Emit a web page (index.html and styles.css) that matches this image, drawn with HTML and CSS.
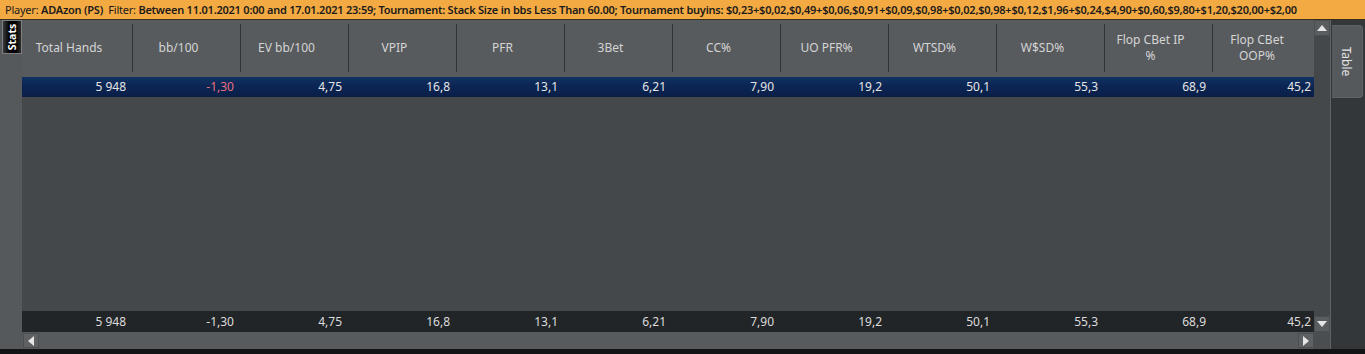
FILE: index.html
```html
<!DOCTYPE html>
<html>
<head>
<meta charset="utf-8">
<link rel="stylesheet" href="styles.css">
</head>
<body>
<div class="app">
  <div class="filterbar"><span class="lbl">Player:</span> <b>ADAzon (PS)</b>&nbsp;&nbsp;<span class="lbl">Filter:</span> <b>Between 11.01.2021 0:00 and 17.01.2021 23:59; Tournament: Stack Size in bbs Less Than 60.00; Tournament buyins: $0,23+$0,02,$0,49+$0,06,$0,91+$0,09,$0,98+$0,02,$0,98+$0,12,$1,96+$0,24,$4,90+$0,60,$9,80+$1,20,$20,00+$2,00</b></div>
  <div class="main">
    <div class="side"><div class="stats-tab"><span>Stats</span></div></div>
    <div class="grid">
      <div class="cols thead">
        <div class="th">Total Hands</div>
        <div class="th">bb/100</div>
        <div class="th">EV bb/100</div>
        <div class="th">VPIP</div>
        <div class="th">PFR</div>
        <div class="th">3Bet</div>
        <div class="th">CC%</div>
        <div class="th">UO PFR%</div>
        <div class="th">WTSD%</div>
        <div class="th">W$SD%</div>
        <div class="th">Flop CBet IP<br>%</div>
        <div class="th">Flop CBet<br>OOP%</div>
      </div>
      <div class="cols row sel">
        <div class="td">5 948</div>
        <div class="td neg">-1,30</div>
        <div class="td">4,75</div>
        <div class="td">16,8</div>
        <div class="td">13,1</div>
        <div class="td">6,21</div>
        <div class="td">7,90</div>
        <div class="td">19,2</div>
        <div class="td">50,1</div>
        <div class="td">55,3</div>
        <div class="td">68,9</div>
        <div class="td">45,2</div>
      </div>
      <div class="fill"></div>
      <div class="cols row total">
        <div class="td">5 948</div>
        <div class="td">-1,30</div>
        <div class="td">4,75</div>
        <div class="td">16,8</div>
        <div class="td">13,1</div>
        <div class="td">6,21</div>
        <div class="td">7,90</div>
        <div class="td">19,2</div>
        <div class="td">50,1</div>
        <div class="td">55,3</div>
        <div class="td">68,9</div>
        <div class="td">45,2</div>
      </div>
      <div class="hscroll">
        <div class="sbtn"><svg width="6" height="10" viewBox="0 0 6 10"><polygon points="6,0 6,10 0,5" fill="#e6e6e6"/></svg></div>
        <div class="htrack"></div>
        <div class="sbtn"><svg width="6" height="10" viewBox="0 0 6 10"><polygon points="0,0 0,10 6,5" fill="#e6e6e6"/></svg></div>
      </div>
    </div>
    <div class="vscroll">
      <div class="vbtn"><svg width="10" height="6" viewBox="0 0 10 6"><polygon points="0,6 10,6 5,0" fill="#e6e6e6"/></svg></div>
      <div class="vtrack"></div>
      <div class="vbtn"><svg width="10" height="6" viewBox="0 0 10 6"><polygon points="0,0 10,0 5,6" fill="#e6e6e6"/></svg></div>
      <div class="corner"></div>
    </div>
    <div class="rpanel"><div class="table-tab"><span>Table</span></div></div>
  </div>
  <div class="bottom"></div>
</div>
</body>
</html>
```

FILE: styles.css
```css
* { box-sizing: border-box; }
html, body { margin: 0; padding: 0; }
body {
  width: 1365px;
  height: 354px;
  overflow: hidden;
  background: #121314;
  font-family: "Noto Sans", "Open Sans", sans-serif;
}
.app {
  display: flex;
  flex-direction: column;
  height: 354px;
}
.filterbar {
  height: 20px;
  background: #f4aa42;
  border-bottom: 1px solid #3a3020;
  color: #1b1b1b;
  font-size: 11px;
  letter-spacing: -0.23px;
  line-height: 19px;
  padding-left: 5px;
  white-space: nowrap;
  overflow: hidden;
}
.filterbar .lbl { font-weight: 400; }
.filterbar b { font-weight: 600; }
.main {
  height: 329px;
  display: flex;
}
.bottom {
  height: 5px;
  background: #131415;
}
.side {
  width: 22px;
  background: #56595c;
  padding: 0 0 0 2px;
}
.stats-tab {
  width: 20px;
  height: 34px;
  border: 1px solid #7d8083;
  background: linear-gradient(to right, #3a3a3a 0%, #000 35%, #000 70%, #2a2a2a 100%);
  display: flex;
  align-items: center;
  justify-content: center;
}
.stats-tab span {
  transform: rotate(-90deg);
  color: #fff;
  font-size: 10.5px;
  font-weight: 700;
  display: block;
  white-space: nowrap;
}
.grid {
  width: 1295px;
  display: flex;
  flex-direction: column;
  overflow: hidden;
  background: #45484b;
}
.cols {
  display: grid;
  grid-template-columns: 111px repeat(11, 108px);
  width: 1299px;
}
.thead {
  height: 57px;
  background: #585b5e;
  padding: 4px 0 5px;
}
.th {
  border-right: 1px solid #303234;
  color: #d4d4d4;
  font-size: 12px;
  line-height: 16px;
  display: flex;
  align-items: center;
  justify-content: center;
  text-align: center;
  padding: 0 16px 0 0;
}
.th:last-child { border-right: none; padding-right: 20px; }
.row {
  height: 20px;
  font-size: 12px;
  line-height: 20px;
  color: #e6e6e6;
}
.sel {
  background: linear-gradient(to bottom, #113262 0%, #0b2452 50%, #0a1f48 100%);
}
.td {
  text-align: right;
  padding-right: 7px;
}
.td:last-child { padding-right: 10px; }
.td.neg { color: #e56f7d; }
.fill { flex: 1; background: #45484b; }
.total {
  height: 21px;
  line-height: 21px;
  background: #222528;
  color: #dcdcdc;
}
.hscroll {
  height: 17px;
  display: flex;
  background: #585b5e;
  padding: 1px 0 0 1px;
}
.sbtn {
  width: 16px;
  height: 15px;
  background: #5e6164;
  border: 1px solid #4c4f52;
  display: flex;
  align-items: center;
  justify-content: center;
}
.htrack { flex: 1; }
.vscroll {
  width: 17px;
  display: flex;
  flex-direction: column;
  background: #45484b;
  border-right: 1px solid #5f6265;
}
.vbtn {
  height: 16px;
  background: #5a5d60;
  border: 1px solid #4c4f52;
  display: flex;
  align-items: center;
  justify-content: center;
}
.vtrack { flex: 1; }
.corner { height: 17px; background: #4b4e51; }
.rpanel {
  flex: 1;
  background: #34373a;
  padding: 5px 2px 0 1px;
}
.table-tab {
  height: 73px;
  background: #56595c;
  border: 1px solid #606366;
  border-left: none;
  border-radius: 0 4px 4px 0;
  display: flex;
  align-items: center;
  justify-content: center;
}
.table-tab span {
  transform: rotate(90deg);
  color: #e4e4e4;
  font-size: 12px;
  display: block;
  white-space: nowrap;
}
```
